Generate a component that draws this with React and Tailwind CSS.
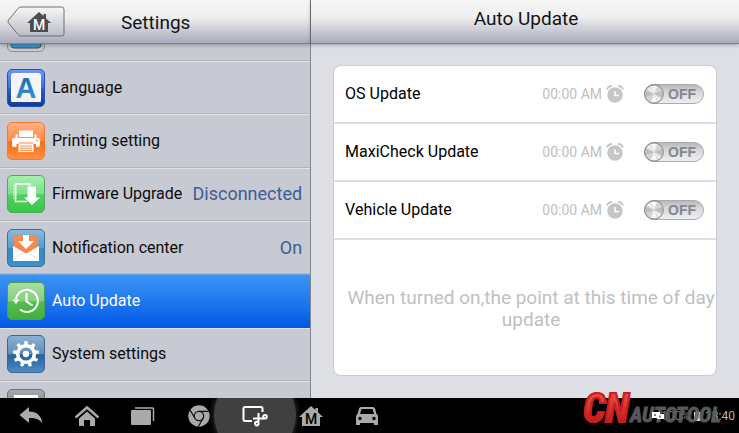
import React, { useState } from "react";

const TEXT_FONT = "font-['Roboto','Liberation_Sans',sans-serif]";

function AppIcon({ id, from, mid, low, to, stroke, children }) {
  return (
    <svg viewBox="0 0 38 38" className="h-[38px] w-[38px] shrink-0" aria-hidden="true">
      <defs>
        <linearGradient id={id} x1="0" y1="0" x2="0" y2="1">
          <stop offset="0" stopColor={from} />
          <stop offset="0.5" stopColor={mid} />
          <stop offset="0.52" stopColor={low} />
          <stop offset="1" stopColor={to} />
        </linearGradient>
      </defs>
      <rect x="0.5" y="0.5" width="37" height="37" rx="4.5" fill={`url(#${id})`} stroke={stroke} />
      {children}
    </svg>
  );
}

function DisplayIcon() {
  return (
    <AppIcon id="display" from="#a0a0a0" mid="#999" low="#888" to="#d2d2d2" stroke="#8b8c90">
      <rect x="4" y="4" width="30" height="30" rx="3" fill="#4296c8" stroke="#3a5566" />
    </AppIcon>
  );
}

function LanguageIcon() {
  return (
    <AppIcon id="language" from="#6b9af8" mid="#3d6fe0" low="#2a5cd0" to="#0c3a9c" stroke="#2352b8">
      <defs>
        <linearGradient id="languageLetter" x1="0" y1="0" x2="0" y2="1">
          <stop offset="0" stopColor="#1660b0" />
          <stop offset="1" stopColor="#3c9cdc" />
        </linearGradient>
      </defs>
      <rect x="4.5" y="4.5" width="29" height="29" rx="2" fill="#f4f4f5" stroke="#fff" />
      <path d="M5 33.5h28.5" stroke="#23458c" />
      <text x="19" y="29" textAnchor="middle" fontSize="29" fontWeight="700" fontFamily="Liberation Sans, sans-serif" fill="url(#languageLetter)">A</text>
    </AppIcon>
  );
}

function PrinterIcon() {
  return (
    <AppIcon id="printer" from="#ffb184" mid="#ff8a45" low="#ff6a08" to="#ff944a" stroke="#f57a2c">
      <g fill="#fff">
        <path d="M12 8.500h14V15H12z" />
        <path d="M5 18q0-2 2-2h1.500v-3q0-.8.8-.8h1.200V16h17v-3.800h1.200q.8 0 .8.800v3H31q2 0 2 2v5q0 2-2 2h-2v-3H9.500v3H7q-2 0-2-2z" />
        <path d="M11.500 21.500h15v8.500h-15z" />
      </g>
      <path d="M11.500 21h15M13 24h12M13 26.200h12M13 28.400h12" stroke="#ff8a3c" />
      <circle cx="30" cy="18.500" r=".9" fill="#ff8a3c" />
    </AppIcon>
  );
}

function FirmwareIcon() {
  return (
    <AppIcon id="firmware" from="#a8efb0" mid="#7cdf88" low="#50d260" to="#37c647" stroke="#4fa75b">
      <path d="M20 26.500H8.500V9H23v2" fill="none" stroke="#fff" strokeWidth="1.300" />
      <path d="M6 11h4M6 14h4M6 17h4M6 20h4M6 23h4" stroke="#fff" />
      <path d="M20.500 11.500h8.500v11h4L25 30l-8-7.500h3.500z" fill="#fff" />
    </AppIcon>
  );
}

function MailIcon() {
  return (
    <AppIcon id="mail" from="#8fb8da" mid="#5a9bca" low="#3b88bf" to="#3c92c8" stroke="#3b6f9c">
      <path d="M7 6h24v14l-9 7h-6l-9-7z" fill="#f48a52" />
      <path d="M16 6h6v6h5l-8 8-8-8h5z" fill="#fff" />
      <path d="M6 17l11 6.500q2 1 4 0L32 17v15H6z" fill="#fff" />
      <path d="M6.500 31.500l9-7.500M31.500 31.500l-9-7.500" stroke="#e2e2e4" />
    </AppIcon>
  );
}

function HistoryIcon() {
  return (
    <AppIcon id="history" from="#a8e0a2" mid="#85cf80" low="#58bd52" to="#3eb03c" stroke="#4c9f50">
      <g fill="none" stroke="#fff" strokeWidth="2">
        <path d="M9 17a11 11 0 1 1 4 10.500" />
        <path d="M19.500 11v8.500l6 4" />
      </g>
      <path d="M5.500 17.500h7L9 22z" fill="#fff" />
    </AppIcon>
  );
}

function GearIcon() {
  const teeth = [0, 40, 80, 120, 160, 200, 240, 280, 320];
  return (
    <AppIcon id="gear" from="#8db1d2" mid="#5d8fbd" low="#24639f" to="#4f8abf" stroke="#3d6894">
      <circle cx="19" cy="19" r="8.3" fill="none" stroke="#fff" strokeWidth="3.5" />
      {teeth.map((deg) => (
        <path key={deg} d="M17 10l.5-4h3l.5 4z" fill="#fff" transform={`rotate(${deg} 19 19)`} />
      ))}
      <circle cx="19" cy="19" r="3.2" fill="#fff" />
    </AppIcon>
  );
}

function AboutIcon() {
  return (
    <AppIcon id="about" from="#a9aaad" mid="#85868a" low="#75767a" to="#666" stroke="#707176">
      <rect x="7" y="6" width="24" height="26" fill="#fff" />
    </AppIcon>
  );
}

function HouseM({ house, letter, className }) {
  return (
    <svg viewBox="0 0 24 20" className={className} aria-hidden="true">
      <path d="M12 0l4.500 4V2H19v4.200L24 11h-3v9H3v-9H0z" fill={house} />
      <text x="12" y="18" textAnchor="middle" fontSize="14" fontWeight="500" fontFamily="Roboto, sans-serif" fill={letter}>M</text>
    </svg>
  );
}

function AlarmIcon() {
  return (
    <svg viewBox="0 0 18 20" className="h-5 w-[18px]" aria-hidden="true">
      <circle cx="9" cy="11" r="7.7" fill="#c6c6c6" />
      <path d="M1 5.500Q2 2 6 2M17 5.500Q16 2 12 2" fill="none" stroke="#c6c6c6" strokeWidth="2" />
      <path d="M9 7v4.500h4" fill="none" stroke="#fff" strokeWidth="1.500" />
    </svg>
  );
}

const menu = [
  { label: "Language", Icon: LanguageIcon },
  { label: "Printing setting", Icon: PrinterIcon },
  { label: "Firmware Upgrade", Icon: FirmwareIcon, value: "Disconnected" },
  { label: "Notification center", Icon: MailIcon, value: "On" },
  { label: "Auto Update", Icon: HistoryIcon },
  { label: "System settings", Icon: GearIcon },
];

const updates = ["OS Update", "MaxiCheck Update", "Vehicle Update"];

function Header({ children }) {
  return (
    <header className="relative z-10 flex h-11 shrink-0 items-center border-b border-[#80828c] bg-linear-to-b from-[#f6f6f6] via-[#eeeef0] via-40% to-[#a9abba] shadow-[0_1px_4px_rgba(0,0,0,0.3)]">
      {children}
    </header>
  );
}

function MenuRow({ item, active, onSelect }) {
  const { Icon, label, value } = item;
  return (
    <li className="flex min-h-0 flex-1">
      <button
        type="button"
        onClick={onSelect}
        className={
          active
            ? "flex w-full items-center gap-[7px] border-t border-[#6aa9ee] bg-linear-to-b from-[#3c94f4] to-[#0058e6] pr-2 pl-[7px] text-white"
            : "flex w-full items-center gap-[7px] border-t border-b border-t-[#e2e3e6] border-b-[#b4b6bc] pr-2 pl-[7px] text-[#0c0c0e]"
        }
      >
        <Icon />
        <span className="text-base whitespace-nowrap">{label}</span>
        {value && <span className="ml-auto text-lg text-[#415c92]">{value}</span>}
      </button>
    </li>
  );
}

function Toggle({ label }) {
  return (
    <label className="relative block h-5 w-[60px] cursor-pointer">
      <input type="checkbox" role="switch" aria-label={label} className="absolute inset-0 h-full w-full cursor-pointer opacity-0" />
      <svg viewBox="0 0 60 20" className="h-5 w-[60px]" aria-hidden="true">
        <defs>
          <linearGradient id="track" x1="0" y1="0" x2="0" y2="1">
            <stop offset="0" stopColor="#b4b6bb" />
            <stop offset="0.4" stopColor="#d6d8dc" />
            <stop offset="1" stopColor="#eeeff1" />
          </linearGradient>
        </defs>
        <rect x="0.5" y="0.5" width="59" height="19" rx="9.5" fill="url(#track)" stroke="#a9abaf" />
        <circle cx="10" cy="10" r="9.3" fill="#d4d4d4" stroke="#818181" />
        <path d="M10 10L7 2h6zM10 10l-3 8h6z" fill="#f6f6f6" />
        <path d="M10 10L2 7v6zM10 10l8-3v6z" fill="#bdbdbd" />
        <path d="M10 10L3 5l3-2zM10 10l7 5-3 2z" fill="#f0f0f0" />
        <text x="24" y="15" fontSize="14" fontWeight="700" fontFamily="Liberation Sans, sans-serif" fill="#85878a">OFF</text>
      </svg>
    </label>
  );
}

function BackIcon() {
  return (
    <svg viewBox="0 0 24 20" className="h-5 w-6" fill="#aaa" aria-hidden="true">
      <path d="M10 1v4.500c8 0 12.500 4.500 13.500 12-3-4.500-7-5.700-13.500-5.500V17L.5 9z" />
    </svg>
  );
}

function HomeIcon() {
  return (
    <svg viewBox="0 0 26 22" className="h-[22px] w-[26px]" aria-hidden="true">
      <path d="M1.500 12.500L13 2.500l11.500 10" fill="none" stroke="#aaa" strokeWidth="2.500" />
      <path d="M13 6.500l8 7V21h-5v-6h-6v6H5v-7.500z" fill="#aaa" />
    </svg>
  );
}

function RecentIcon() {
  return (
    <svg viewBox="0 0 24 20" className="h-5 w-6" aria-hidden="true">
      <rect x="0" y="4" width="20" height="15" rx="1" fill="#aaa" />
      <path d="M4 2h17.500q1 0 1 1v12" fill="none" stroke="#aaa" strokeWidth="1.500" />
    </svg>
  );
}

function BrowserIcon() {
  return (
    <svg viewBox="0 0 22 22" className="h-[22px] w-[22px]" aria-hidden="true">
      <circle cx="11" cy="11" r="10.7" fill="#aaa" />
      <g fill="none" stroke="#111" strokeWidth="1.2">
        <circle cx="11" cy="11" r="4.7" />
        <path d="M11 6.300h9.800M6.900 13.300L2 4.900M15.100 13.300l-4.900 8.400" />
      </g>
      <circle cx="11" cy="11" r="3" fill="#aaa" />
    </svg>
  );
}

function ScreenshotIcon() {
  return (
    <svg viewBox="0 0 26 22" className="h-[22px] w-[26px]" fill="none" stroke="#fff" strokeWidth="2" aria-hidden="true">
      <path d="M10 16H3q-1.500 0-1.500-1.500v-11Q1.500 2 3 2h16q1.500 0 1.500 1.500V7" />
      <path d="M16.500 8v9M11 13.500h11" />
      <circle cx="14.800" cy="18.600" r="1.8" />
      <circle cx="23" cy="11.800" r="1.8" />
    </svg>
  );
}

function CarIcon() {
  return (
    <svg viewBox="0 0 24 20" className="h-5 w-6" aria-hidden="true">
      <path d="M6 1h12q1.500 0 2 1.500L21.500 8q1.500.5 1.500 3v8h-4v-2H5v2H1v-8q0-2.500 1.500-3L4 2.500Q4.500 1 6 1z" fill="#aaa" />
      <path d="M6.500 3h11L19 8H5z" fill="#000" />
      <circle cx="5" cy="12.500" r="1.7" fill="#000" />
      <circle cx="19" cy="12.500" r="1.7" fill="#000" />
    </svg>
  );
}

const navItems = [
  { name: "Back", icon: <BackIcon /> },
  { name: "Home", icon: <HomeIcon /> },
  { name: "Recent apps", icon: <RecentIcon /> },
  { name: "Browser", icon: <BrowserIcon /> },
  { name: "Screenshot", icon: <ScreenshotIcon />, pressed: true },
  { name: "MaxiSys home", icon: <HouseM house="#aaa" letter="#000" className="h-5 w-6" /> },
  { name: "Vehicle", icon: <CarIcon /> },
];

function NavBar() {
  return (
    <nav className="relative flex h-[35px] shrink-0 items-center bg-black pl-[3px]">
      {navItems.map(({ name, icon, pressed }) => (
        <button key={name} type="button" aria-label={name} className="relative flex h-full w-14 items-center justify-center">
          {pressed && (
            <span className="absolute inset-y-0 -left-5 w-24 overflow-hidden">
              <span className="absolute -top-6 left-[7px] h-[82px] w-[82px] rounded-full bg-[#404040] shadow-[0_0_6px_#404040]" />
            </span>
          )}
          <span className="relative">{icon}</span>
        </button>
      ))}
      <div className="ml-auto flex items-center gap-1 pr-1 text-xs text-[#b4b4b4]">
        <span className="ml-2 text-[#777]">100%</span>
        <svg viewBox="0 0 7 10" className="h-[10px] w-[7px]" aria-hidden="true">
          <path d="M2 0h3v1h2v9H0V1h2z" fill="#ddd" />
        </svg>
        <span>13:40</span>
      </div>
      {/* Logo stamp over the status area */}
      <div className="pointer-events-none absolute right-[18px] bottom-0 flex items-baseline font-['Liberation_Sans_Narrow','Roboto_Condensed','Liberation_Sans',sans-serif] font-bold italic">
        <span className="bg-linear-to-b from-[#f0504c] to-[#b80c0c] bg-clip-text pr-px text-[40px] leading-9 text-transparent [-webkit-text-stroke:2px_#cc1c1c]">CN</span>
        <span className="text-[21px] leading-9 text-[#666]/90 [-webkit-text-stroke:1px_#555]">AUTOTOOL</span>
      </div>
      <svg viewBox="0 0 12 10" className="absolute right-[75px] h-[10px] w-3" aria-hidden="true">
        <path d="M0 1h8v2h4v5H5V7H0z" fill="#fff" />
        <path d="M3 3v2M8 4.500v2" stroke="#000" />
      </svg>
    </nav>
  );
}

export default function App() {
  const [selected, setSelected] = useState("Auto Update");

  return (
    <div className={`flex h-screen flex-col overflow-hidden ${TEXT_FONT}`}>
      <main className="flex min-h-0 flex-1">
        {/* Settings list */}
        <aside className="flex w-[42.1%] shrink-0 flex-col border-r border-[#85878c] bg-[#c7cad2]">
          <Header>
            <button type="button" aria-label="Home" className="relative ml-[7px] flex h-[31px] w-[58px] items-center justify-center pl-1.5">
              <svg viewBox="0 0 58 31" className="absolute inset-0" aria-hidden="true">
                <defs>
                  <linearGradient id="back" x1="0" y1="0" x2="0" y2="1">
                    <stop offset="0" stopColor="#f8f8f9" />
                    <stop offset="1" stopColor="#b9bbc5" />
                  </linearGradient>
                </defs>
                <path d="M14 1h40.500q2.500 0 2.500 2.500v24q0 2.500-2.500 2.500H14q-2 0-3-1.500L1.500 17q-1-1.500 0-3L11 2.500Q12 1 14 1z" fill="url(#back)" stroke="#6f7176" />
              </svg>
              <HouseM house="#4d4d4f" letter="#fff" className="relative h-5 w-6" />
            </button>
            <h1 className="ml-14 pt-[3px] text-[19px] text-[#141416]">Settings</h1>
          </Header>
          <ul className="flex min-h-0 flex-1 flex-col">
            <li className="flex h-[17px] shrink-0 items-end overflow-hidden border-b border-[#b4b6bc] pb-2 pl-[7px]">
              <DisplayIcon />
            </li>
            {menu.map((item) => (
              <MenuRow key={item.label} item={item} active={item.label === selected} onSelect={() => setSelected(item.label)} />
            ))}
            <li className="flex h-[17px] shrink-0 items-start overflow-hidden border-t border-[#e2e3e6] pt-[7px] pl-[7px]">
              <AboutIcon />
            </li>
          </ul>
        </aside>

        {/* Detail */}
        <section className="flex min-w-0 flex-1 flex-col bg-[#dddfe5]">
          <Header>
            <h2 className="w-full pb-1 pl-0.5 text-center text-[19px] text-[#141416]">Auto Update</h2>
          </Header>
          <div className="mx-[22px] mt-[21px] mb-[22px] flex flex-1 flex-col rounded-lg border border-[#c9ccd3] bg-white">
            {updates.map((name) => (
              <div key={name} className="flex h-[58px] shrink-0 items-center border-b-2 border-[#dddfe6] pr-3 pl-[11px]">
                <span className="text-base text-black">{name}</span>
                <button type="button" className="mr-5 ml-auto flex items-center gap-1 text-sm text-[#c0c0c0]">
                  00:00 AM
                  <AlarmIcon />
                </button>
                <Toggle label={name} />
              </div>
            ))}
            <p className="flex flex-1 items-center justify-center pt-0.5 pl-3 text-center text-[19px] leading-[22px] text-[#c0c0c0]">
              When turned on,the point at this time of day update
            </p>
          </div>
        </section>
      </main>
      <NavBar />
    </div>
  );
}
